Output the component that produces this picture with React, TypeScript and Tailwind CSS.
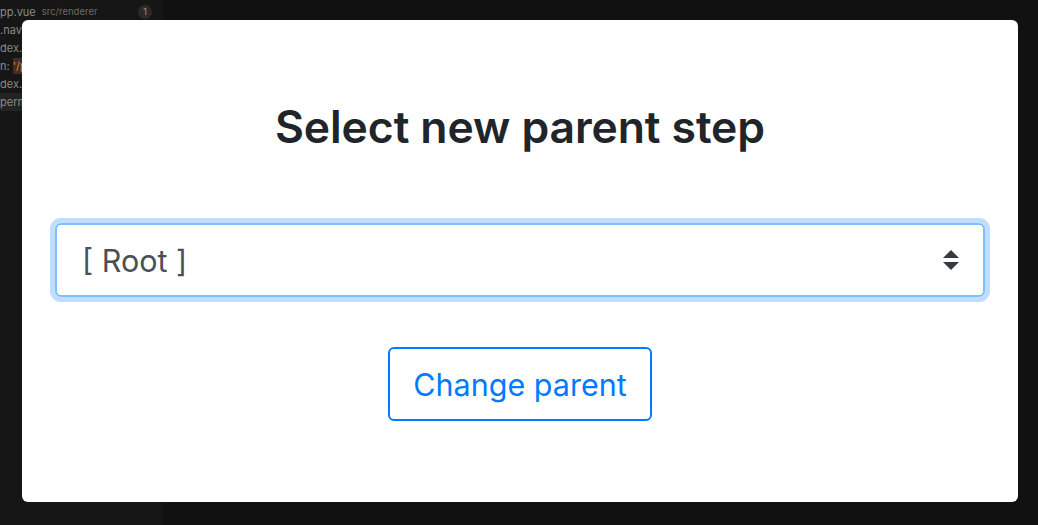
export default function App() {
  return (
    <div className="relative w-[1038px] h-[525px] overflow-hidden bg-[#111111] font-['Inter','Liberation_Sans',sans-serif]">
      {/* Background editor, dimmed behind the modal */}
      <div className="flex h-full">
        <div className="w-[163px] h-full bg-[#161616] flex flex-col pt-[3px] text-[11px] text-[#8a8a8a]">
          <div className="h-[18px] flex items-center whitespace-nowrap pr-[11px]">
            <span>pp.vue</span>
            <span className="ml-[6px] text-[9.5px] text-[#6a6a6a]">src/renderer</span>
            <span className="ml-auto w-[14px] h-[14px] rounded-full bg-[#2a2a2a] text-[9px] text-[#9a9a9a] flex items-center justify-center">1</span>
          </div>
          <div className="h-[18px] flex items-center whitespace-nowrap">.navigation.js</div>
          <div className="h-[18px] flex items-center whitespace-nowrap">dex.js</div>
          <div className="h-[18px] flex items-center whitespace-nowrap">
            <span>n:&nbsp;</span>
            <span className="text-[#c98a5a] bg-[#4a2a1a]">'/permissions'</span>
          </div>
          <div className="h-[18px] flex items-center whitespace-nowrap">dex.vue</div>
          <div className="h-[18px] flex items-center whitespace-nowrap bg-[#232323]">permissions.vue</div>
        </div>
        <div className="flex-1 h-full bg-[#111111]"></div>
      </div>

      {/* Modal */}
      <div className="absolute left-[22px] top-[20px] w-[996px] h-[482px] bg-white rounded-[6px] px-[33px] pt-[81px] flex flex-col items-center">
        <h1 className="text-[44.5px] leading-[1.2] font-semibold text-[#212529] tracking-[-0.1px]">Select new parent step</h1>

        <div className="mt-[69px] w-full h-[74px] rounded-[6px] border-[2px] border-[#80bdff] ring-[5px] ring-[#bfdeff] flex items-center pl-[25px] pr-[24px]">
          <span className="text-[30.5px] text-[#495057]">[ Root ]</span>
          <svg className="ml-auto" width="16" height="20" viewBox="0 0 16 20">
            <path d="M8 0 L16 8 L0 8 Z" fill="#343a40" />
            <path d="M0 12 L16 12 L8 20 Z" fill="#343a40" />
          </svg>
        </div>

        <button className="mt-[50px] w-[264px] h-[74px] rounded-[6px] border-[2px] border-[#007bff] text-[#007bff] text-[30.5px] bg-white">
          Change parent
        </button>
      </div>
    </div>
  );
}
